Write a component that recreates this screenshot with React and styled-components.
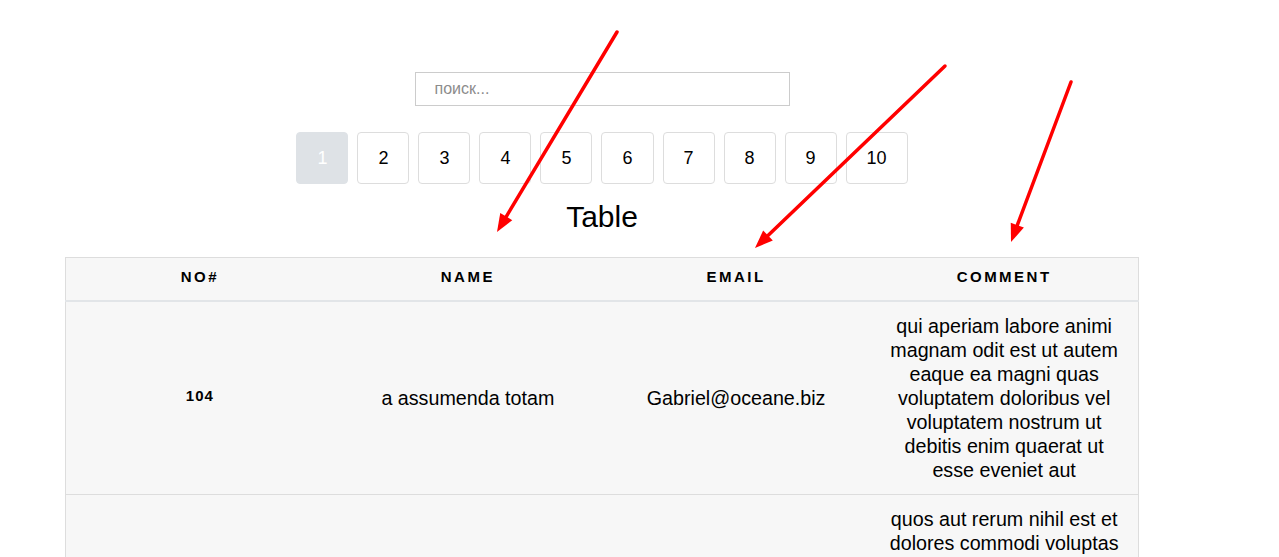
import styled, { createGlobalStyle } from "styled-components";

const GlobalStyle = createGlobalStyle`
  html, body {
    margin: 0;
    padding: 0;
    background: #fff;
    font-family: "Liberation Sans", Arial, sans-serif;
    color: #000;
  }
`;

const Page = styled.div`
  position: relative;
  width: 1279px;
  min-height: 557px;
  overflow: hidden;
`;

const Wrapper = styled.div`
  width: 1074px;
  margin-left: 65px;
  padding-top: 72px;
  display: flex;
  flex-direction: column;
  align-items: center;
`;

const Search = styled.input`
  width: 375px;
  height: 34px;
  box-sizing: border-box;
  border: 1px solid #cccccc;
  padding: 0 19px;
  font-family: "Liberation Sans", Arial, sans-serif;
  font-size: 16px;
  color: #333;
  outline: none;
  &::placeholder {
    color: #8c8c8c;
  }
`;

const Pagination = styled.div`
  display: flex;
  gap: 9px;
  margin-top: 26px;
`;

const PageButton = styled.button`
  height: 52px;
  box-sizing: border-box;
  border-radius: 4px;
  border: 1px solid ${({ $active }) => ($active ? "#dee2e6" : "#dddddd")};
  background: ${({ $active }) => ($active ? "#dee2e6" : "#ffffff")};
  color: ${({ $active }) => ($active ? "#ffffff" : "#000000")};
  font-family: "Liberation Sans", Arial, sans-serif;
  font-size: 18px;
  padding: 0 20px;
  cursor: pointer;
`;

const Title = styled.h2`
  margin: 16px 0 23px;
  font-size: 30px;
  font-weight: 400;
  line-height: 34px;
`;

const Table = styled.table`
  width: 1074px;
  border-collapse: collapse;
  table-layout: fixed;
  background: #f7f7f7;
  border: 1px solid #dddddd;
`;

const HeadCell = styled.th`
  height: 43px;
  padding: 0 16px 4px;
  box-sizing: border-box;
  font-size: 15px;
  font-weight: 700;
  letter-spacing: 2.5px;
  text-transform: uppercase;
  text-align: center;
  border-bottom: 2px solid #e2e5e8;
`;

const Row = styled.tr`
  border-bottom: 1px solid #dddddd;
`;

const IdCell = styled.th`
  padding: 10px 16px 14px;
  font-size: 15px;
  font-weight: 700;
  letter-spacing: 1px;
  text-align: center;
`;

const Cell = styled.td`
  padding: 12px 16px;
  font-size: 19.7px;
  line-height: 24px;
  text-align: center;
  vertical-align: middle;
`;

const Arrows = styled.svg`
  position: absolute;
  top: 0;
  left: 0;
  pointer-events: none;
`;

const rows = [
  {
    id: 104,
    name: "a assumenda totam",
    email: "Gabriel@oceane.biz",
    body:
      "qui aperiam labore animi magnam odit est ut autem eaque ea magni quas voluptatem doloribus vel voluptatem nostrum ut debitis enim quaerat ut esse eveniet aut",
  },
  {
    id: 105,
    name: "voluptatem sit eius",
    email: "Lacey@alanna.name",
    body:
      "quos aut rerum nihil est et dolores commodi voluptas voluptatem excepturi et et aut ipsam sed consectetur fugit expedita",
  },
];

const arrows = [
  { x1: 617, y1: 32, x2: 497, y2: 232 },
  { x1: 945, y1: 66, x2: 755, y2: 248 },
  { x1: 1071, y1: 82, x2: 1011, y2: 242 },
];

function Arrow({ x1, y1, x2, y2 }) {
  const a = Math.atan2(y2 - y1, x2 - x1);
  const len = 18;
  const w = 7;
  const bx = x2 - len * Math.cos(a);
  const by = y2 - len * Math.sin(a);
  const px = -Math.sin(a) * w;
  const py = Math.cos(a) * w;
  return (
    <g>
      <line x1={x1} y1={y1} x2={bx} y2={by} stroke="#ff0000" strokeWidth="3.5" strokeLinecap="round" />
      <polygon points={`${x2},${y2} ${bx + px},${by + py} ${bx - px},${by - py}`} fill="#ff0000" />
    </g>
  );
}

export default function App() {
  return (
    <Page>
      <GlobalStyle />
      <Wrapper>
        <Search placeholder="поиск..." />
        <Pagination>
          {Array.from({ length: 10 }, (_, i) => (
            <PageButton key={i} $active={i === 0}>
              {i + 1}
            </PageButton>
          ))}
        </Pagination>
        <Title>Table</Title>
        <Table>
          <thead>
            <tr>
              <HeadCell>No#</HeadCell>
              <HeadCell>Name</HeadCell>
              <HeadCell>Email</HeadCell>
              <HeadCell>Comment</HeadCell>
            </tr>
          </thead>
          <tbody>
            {rows.map((r) => (
              <Row key={r.id}>
                <IdCell>{r.id}</IdCell>
                <Cell>{r.name}</Cell>
                <Cell>{r.email}</Cell>
                <Cell>{r.body}</Cell>
              </Row>
            ))}
          </tbody>
        </Table>
      </Wrapper>
      <Arrows width="1279" height="557">
        {arrows.map((a, i) => (
          <Arrow key={i} {...a} />
        ))}
      </Arrows>
    </Page>
  );
}
